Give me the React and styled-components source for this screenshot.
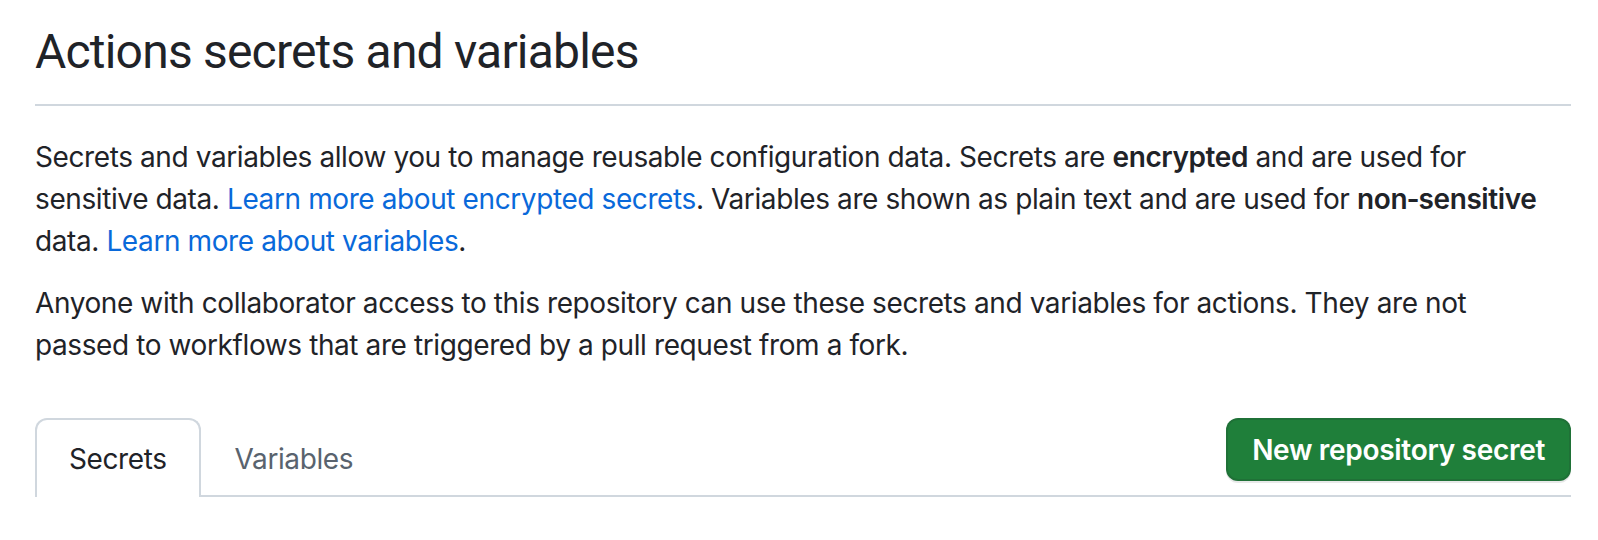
import React from 'react';
import styled, { createGlobalStyle } from 'styled-components';

const Global = createGlobalStyle`
  * { box-sizing: border-box; }
  body {
    margin: 0;
    background: #ffffff;
    color: #1f2328;
    font-family: Inter, "Noto Sans", "Liberation Sans", sans-serif;
  }
`;

const Page = styled.div`
  width: 1536px;
  margin-left: 35px;
  padding-top: 22px;
`;

const Subhead = styled.div`
  padding-bottom: 22px;
  border-bottom: 2px solid #d0d7de;
  margin-bottom: 30px;
`;

const Title = styled.h2`
  margin: 0;
  font-family: Roboto, "Liberation Sans", sans-serif;
  font-size: 48px;
  font-weight: 400;
  line-height: 60px;
  letter-spacing: -0.8px;
  color: #1f2328;
`;

const Text = styled.p`
  max-width: 1520px;
  margin: 0 0 20px;
  font-size: 28px;
  line-height: 42px;
  letter-spacing: -0.4px;
  color: #1f2328;
  strong { font-weight: 600; }
`;

const Link = styled.a`
  color: #0969da;
  text-decoration: none;
`;

const TabBar = styled.div`
  margin-top: 52px;
  display: flex;
  align-items: flex-start;
  border-bottom: 2px solid #d0d7de;
`;

const Tab = styled.div`
  padding: 0 32px;
  height: 79px;
  display: flex;
  align-items: center;
  font-size: 28px;
  letter-spacing: -0.4px;
  color: ${p => (p.$active ? '#1f2328' : '#59636e')};
  border: 2px solid ${p => (p.$active ? '#d0d7de' : 'transparent')};
  border-bottom: none;
  border-radius: 12px 12px 0 0;
  background: ${p => (p.$active ? '#fff' : 'transparent')};
  margin-bottom: -2px;
  position: relative;
`;

const Spacer = styled.div`
  flex: 1;
`;

const Button = styled.button`
  height: 63px;
  padding: 0 24px;
  border: 2px solid rgba(31, 35, 40, 0.15);
  border-radius: 12px;
  background: #1f7f3a;
  color: #fff;
  font-family: inherit;
  font-size: 28px;
  font-weight: 600;
  letter-spacing: -0.3px;
  box-shadow: 0 2px 0 rgba(31, 35, 40, 0.1);
`;

export default function App() {
  return (
    <>
      <Global />
      <Page>
        <Subhead>
          <Title>Actions secrets and variables</Title>
        </Subhead>
        <Text>
          Secrets and variables allow you to manage reusable configuration data. Secrets are{' '}
          <strong>encrypted</strong> and are used for sensitive data.{' '}
          <Link href="#">Learn more about encrypted secrets</Link>. Variables are shown as plain text and
          are used for <strong>non&#8209;sensitive</strong> data. <Link href="#">Learn more about variables</Link>.
        </Text>
        <Text>
          Anyone with collaborator access to this repository can use these secrets and variables for
          actions. They are not passed to workflows that are triggered by a pull request from a fork.
        </Text>
        <TabBar>
          <Tab $active>Secrets</Tab>
          <Tab>Variables</Tab>
          <Spacer />
          <Button>New repository secret</Button>
        </TabBar>
      </Page>
    </>
  );
}
